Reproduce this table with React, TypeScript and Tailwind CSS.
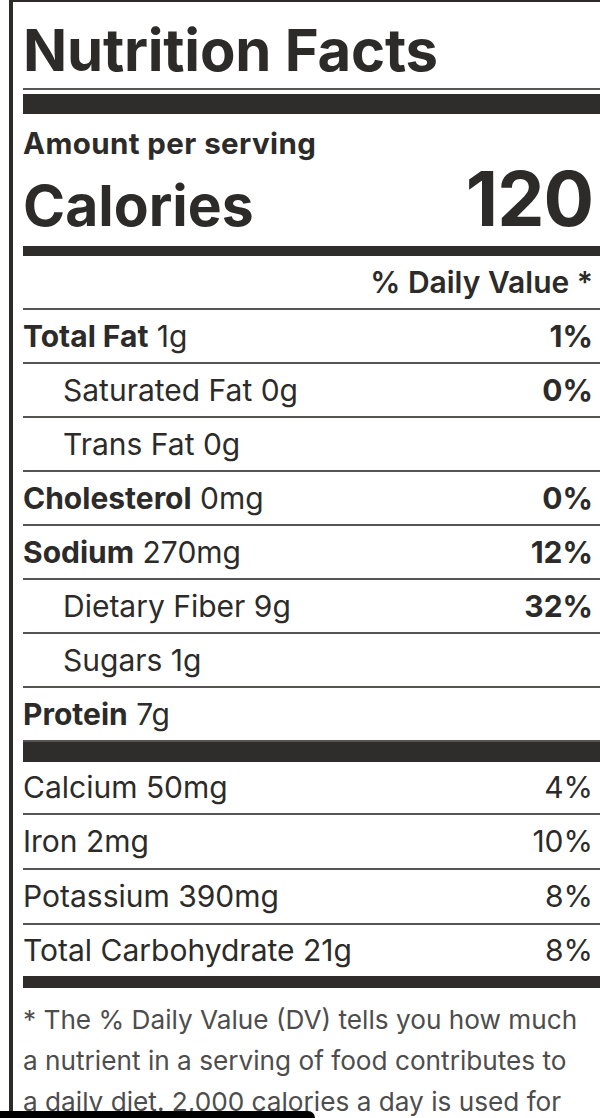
import * as React from "react";

interface Nutrient {
  name: string;
  amount: string;
  dv?: string;
  bold?: boolean;
  indent?: boolean;
}

const mainRows: Nutrient[] = [
  { name: "Total Fat", amount: "1g", dv: "1%", bold: true },
  { name: "Saturated Fat", amount: "0g", dv: "0%", indent: true },
  { name: "Trans Fat", amount: "0g", indent: true },
  { name: "Cholesterol", amount: "0mg", dv: "0%", bold: true },
  { name: "Sodium", amount: "270mg", dv: "12%", bold: true },
  { name: "Dietary Fiber", amount: "9g", dv: "32%", indent: true },
  { name: "Sugars", amount: "1g", indent: true },
  { name: "Protein", amount: "7g", bold: true },
];

const minerals = [
  { label: "Calcium 50mg", dv: "4%", h: "h-[53px] border-b-2" },
  { label: "Iron 2mg", dv: "10%", h: "h-[55px] border-b-2" },
  { label: "Potassium 390mg", dv: "8%", h: "h-[55px] border-b-2" },
  { label: "Total Carbohydrate 21g", dv: "8%", h: "h-[51px]" },
];

const footnote = [
  "* The % Daily Value (DV) tells you how much",
  "a nutrient in a serving of food contributes to",
  "a daily diet. 2,000 calories a day is used for",
  "general nutrition advice.",
];

const Row: React.FC<{ item: Nutrient }> = ({ item }) => (
  <div className="flex h-[54px] items-center justify-between border-b-2 border-[#565553] pr-[7px] text-[30px]">
    <span className={item.indent ? "pl-10" : ""}>
      {item.bold ? <b className="font-bold">{item.name}</b> : item.name} {item.amount}
    </span>
    {item.dv && <span className="font-bold">{item.dv}</span>}
  </div>
);

export default function App() {
  return (
    <div className="relative h-[1118px] overflow-hidden bg-white font-['Inter',sans-serif] text-[#2c2b29]">
      <div className="ml-[9px] w-[591px] border-l-4 border-t-2 border-[#2c2b29] pl-[10px]">
        <div className="border-b-2 border-[#565553] pb-[7px] pt-[17px]">
          <h1 className="text-[58px] font-bold leading-[62px] tracking-[-0.2px]">Nutrition Facts</h1>
        </div>
        <div className="mt-[4px] h-[20px] bg-[#2f2d2b]" />
        <div className="pt-[14px] text-[29.5px] font-bold leading-[30px] tracking-[0.4px]">Amount per serving</div>
        <div className="flex h-[82px] items-baseline justify-between pr-[7px] leading-[82px]">
          <span className="text-[57px] font-bold">Calories</span>
          <span className="text-[75px] font-bold tracking-[-1px]">120</span>
        </div>
        <div className="mt-[6px] h-[10px] bg-[#2f2d2b]" />
        <div className="flex h-[54px] items-center justify-end border-b-2 border-[#565553] pr-[7px] text-[30px] font-semibold">
          % Daily Value *
        </div>
        {mainRows.map((r) => (
          <Row key={r.name} item={r} />
        ))}
        <div className="h-[20px] bg-[#2f2d2b]" />
        {minerals.map((m) => (
          <div
            key={m.label}
            className={`flex items-center justify-between border-[#565553] pr-[7px] text-[30px] ${m.h}`}
          >
            <span>{m.label}</span>
            <span>{m.dv}</span>
          </div>
        ))}
        <div className="h-[12px] bg-[#2f2d2b]" />
        <p className="pt-[11px] text-[26.2px] leading-[41px] text-[#4d4d4d]">
          {footnote.map((line) => (
            <span key={line} className="block whitespace-nowrap">
              {line}
            </span>
          ))}
        </p>
      </div>
      <div className="absolute bottom-0 left-0 h-[7px] w-[315px] rounded-tr-[10px] bg-black" />
    </div>
  );
}
